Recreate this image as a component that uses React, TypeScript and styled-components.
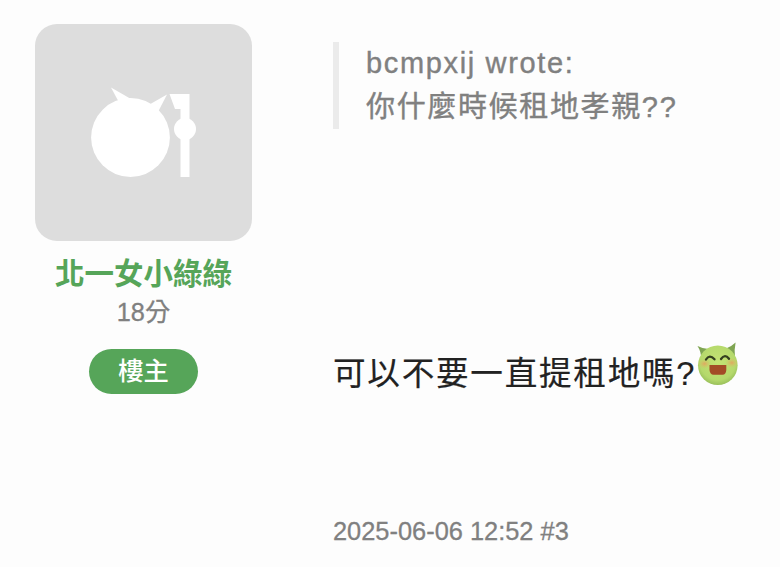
import styled, {createGlobalStyle} from 'styled-components';

const post = {
  author: '北一女小綠綠',
  score: 18,
  badge: '樓主',
  quoteAuthor: 'bcmpxij',
  quote: '你什麼時候租地孝親??',
  content: '可以不要一直提租地嗎?',
  createdAt: '2025-06-06 12:52',
  floor: 3,
};

function DefaultAvatar() {
  return (
    <svg width="217" height="217" viewBox="0 0 217 217" fill="#fff">
      <circle cx="95.5" cy="113.5" r="39.4" />
      <path d="M76 63.5 L96 75 L90 86 L83 76.5 Z" />
      <path d="M132 70.5 L114.5 80.5 L116 90 L123.5 87 Z" />
      <path d="M134.5 70 H154.5 V153 H145.5 V85 H140 Z" />
      <circle cx="150" cy="105" r="11" />
    </svg>
  );
}

function LaughFace() {
  return (
    <Emoji viewBox="0 0 44 44">
      <defs>
        <radialGradient id="face" cx="50%" cy="42%" r="60%">
          <stop offset="0" stopColor="#c5e374" />
          <stop offset="0.75" stopColor="#b5d96c" />
          <stop offset="1" stopColor="#95bc58" />
        </radialGradient>
        <radialGradient id="cheek">
          <stop offset="0" stopColor="#e0a860" />
          <stop offset="1" stopColor="#d5c563" stopOpacity="0" />
        </radialGradient>
      </defs>
      <path d="M0.5 4 Q7 7.5 14 7.2 L4 17 Q4.5 10 0.5 4 Z" fill="#7fa552" />
      <path d="M38.6 0.5 Q34 5 28 7 L38 15.5 Q37 8 38.6 0.5 Z" fill="#7fa552" />
      <circle cx="20.8" cy="23.3" r="19.8" fill="url(#face)" />
      <ellipse cx="7.5" cy="21.8" rx="6.5" ry="5" fill="url(#cheek)" />
      <ellipse cx="34.8" cy="20.8" rx="6.5" ry="5" fill="url(#cheek)" />
      <g fill="none" stroke="#35401f" strokeWidth="2.3" strokeLinecap="round">
        <path d="M9 17.5 Q12.5 11.8 17.5 17.3" />
        <path d="M24 17 Q28 11.3 32 16.8" />
      </g>
      <path d="M12.5 23 H29.3 V28 Q29 32.8 25.5 32.8 H16.5 Q13 32.8 12.5 28 Z" fill="#a34b26" />
    </Emoji>
  );
}

export default function App() {
  return (
    <Post>
      <GlobalStyle />
      <AuthorColumn>
        <AvatarBox>
          <DefaultAvatar />
        </AvatarBox>
        <Nickname>{post.author}</Nickname>
        <Score>{post.score}分</Score>
        <Badge>{post.badge}</Badge>
      </AuthorColumn>
      <ContentColumn>
        <Quote>
          {post.quoteAuthor} wrote:
          <br />
          {post.quote}
        </Quote>
        <Content>
          {post.content}
          <LaughFace />
        </Content>
        <PostInfo>
          {post.createdAt} #{post.floor}
        </PostInfo>
      </ContentColumn>
    </Post>
  );
}

const GlobalStyle = createGlobalStyle`
  body {
    margin: 0;
    background-color: #fdfdfd;
    font-family: 'Liberation Sans', 'Noto Sans CJK TC', sans-serif;
  }
`;

const Post = styled.article`
  box-sizing: border-box;
  display: flex;
  gap: 81px;
  width: 780px;
  height: 567px;
  padding: 24px 35px 0;
  overflow: hidden;
`;

const AuthorColumn = styled.div`
  display: flex;
  flex-direction: column;
  align-items: center;
  width: 217px;
  flex-shrink: 0;
`;

const AvatarBox = styled.div`
  width: 217px;
  height: 217px;
  border-radius: 22px;
  background-color: #ddd;
  overflow: hidden;

  & > svg {
    display: block;
  }
`;

const Nickname = styled.div`
  margin-top: 13px;
  font-size: 29.5px;
  font-weight: 700;
  line-height: 40px;
  white-space: nowrap;
  color: #56a559;
`;

const Score = styled.div`
  font-size: 25.3px;
  line-height: 36px;
  color: #808080;
  -webkit-text-stroke: 0.3px;
`;

const Badge = styled.div`
  margin-top: 19px;
  width: 109px;
  height: 45px;
  border-radius: 23px;
  background-color: #56a559;
  font-size: 25.3px;
  font-weight: 500;
  line-height: 45px;
  text-align: center;
  color: #fff;
`;

const ContentColumn = styled.div`
  flex: 1;
`;

const Quote = styled.blockquote`
  margin: 18px 0 0;
  padding-left: 27px;
  border-left: 6px solid #ebebeb;
  font-size: 29px;
  line-height: 43.5px;
  letter-spacing: 1.65px;
  white-space: nowrap;
  color: #808080;
  -webkit-text-stroke: 0.4px;
`;

const Content = styled.div`
  display: flex;
  margin-top: 212px;
  height: 66px;
  font-size: 32.6px;
  line-height: 66px;
  letter-spacing: 1.75px;
  white-space: nowrap;
  color: #222;
  -webkit-text-stroke: 0.2px;
`;

const Emoji = styled.svg`
  width: 44px;
  height: 44px;
  margin: 1px 0 0 1px;
  flex-shrink: 0;
`;

const PostInfo = styled.div`
  margin-top: 106px;
  font-size: 25.4px;
  line-height: 36px;
  color: #808080;
  -webkit-text-stroke: 0.3px;
`;
